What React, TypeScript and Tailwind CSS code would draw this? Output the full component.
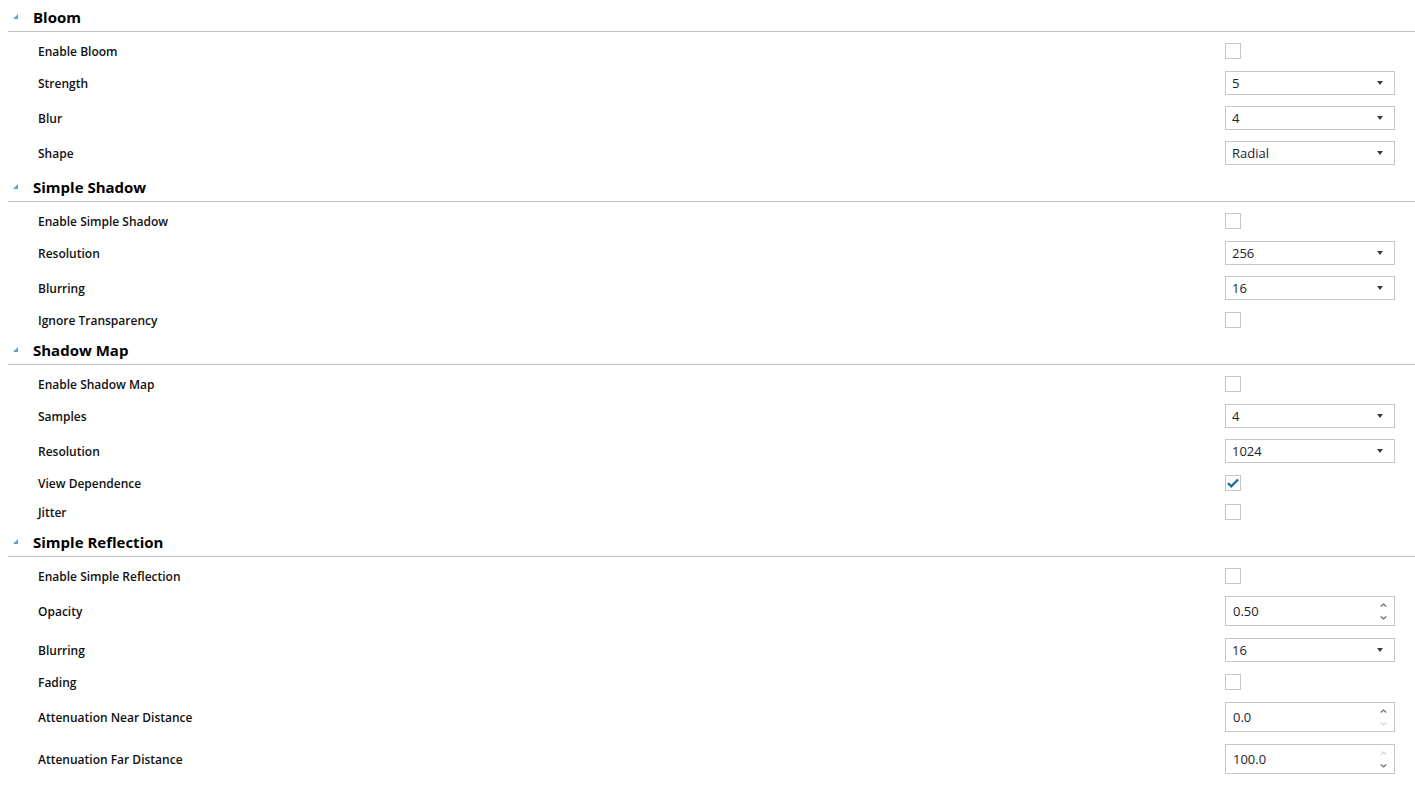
import React from "react";

type Row =
  | { kind: "check"; label: string; pad: string; checked?: boolean }
  | { kind: "select"; label: string; pad: string; value: string }
  | { kind: "num"; label: string; pad: string; value: string; up?: boolean; down?: boolean };

type Section = { title: string; pad: string; rows: Row[] };

const sections: Section[] = [
  {
    title: "Bloom",
    pad: "pt-[3px]",
    rows: [
      { kind: "check", label: "Enable Bloom", pad: "pt-[11px]" },
      { kind: "select", label: "Strength", pad: "pt-[12px]", value: "5" },
      { kind: "select", label: "Blur", pad: "pt-[11px]", value: "4" },
      { kind: "select", label: "Shape", pad: "pt-[11px]", value: "Radial" },
    ],
  },
  {
    title: "Simple Shadow",
    pad: "pt-[8px]",
    rows: [
      { kind: "check", label: "Enable Simple Shadow", pad: "pt-[11px]" },
      { kind: "select", label: "Resolution", pad: "pt-[12px]", value: "256" },
      { kind: "select", label: "Blurring", pad: "pt-[11px]", value: "16" },
      { kind: "check", label: "Ignore Transparency", pad: "pt-[12px]" },
    ],
  },
  {
    title: "Shadow Map",
    pad: "pt-[8px]",
    rows: [
      { kind: "check", label: "Enable Shadow Map", pad: "pt-[11px]" },
      { kind: "select", label: "Samples", pad: "pt-[12px]", value: "4" },
      { kind: "select", label: "Resolution", pad: "pt-[11px]", value: "1024" },
      { kind: "check", label: "View Dependence", pad: "pt-[12px]", checked: true },
      { kind: "check", label: "Jitter", pad: "pt-[13px]" },
    ],
  },
  {
    title: "Simple Reflection",
    pad: "pt-[8px]",
    rows: [
      { kind: "check", label: "Enable Simple Reflection", pad: "pt-[11px]" },
      { kind: "num", label: "Opacity", pad: "pt-[12px]", value: "0.50", up: true, down: true },
      { kind: "select", label: "Blurring", pad: "pt-[12px]", value: "16" },
      { kind: "check", label: "Fading", pad: "pt-[12px]" },
      { kind: "num", label: "Attenuation Near Distance", pad: "pt-[12px]", value: "0.0", up: true, down: false },
      { kind: "num", label: "Attenuation Far Distance", pad: "pt-[12px]", value: "100.0", up: false, down: true },
    ],
  },
];

const Checkbox = ({ checked }: { checked?: boolean }) => (
  <div className="w-4 h-4 border border-[#c6c6c6] bg-white flex items-center justify-center">
    {checked && (
      <svg width="12" height="10" viewBox="0 0 12 10">
        <path d="M1 5.2 L4.3 8.3 L11 1.5" fill="none" stroke="#1b6fa5" strokeWidth="2.4" />
      </svg>
    )}
  </div>
);

const Select = ({ value }: { value: string }) => (
  <div className="h-6 w-full border border-[#c6c6c6] bg-white flex items-center justify-between pl-[6px] pr-[11px]">
    <span className="text-[13px] text-[#1c2230] leading-none">{value}</span>
    <svg width="6" height="4" viewBox="0 0 6 4">
      <path d="M0 0 H6 L3 4 Z" fill="#3c3c3c" />
    </svg>
  </div>
);

const Chevron = ({ up, on }: { up: boolean; on?: boolean }) => (
  <svg width="7" height="4" viewBox="0 0 7 4">
    <path
      d={up ? "M0.8 3.4 L3.5 1 L6.2 3.4" : "M0.8 0.6 L3.5 3 L6.2 0.6"}
      fill="none"
      stroke={on ? "#6e6e6e" : "#d6d6d6"}
      strokeWidth="1.3"
    />
  </svg>
);

const NumBox = ({ value, up, down }: { value: string; up?: boolean; down?: boolean }) => (
  <div className="h-[30px] w-full border border-[#c6c6c6] bg-white flex items-center justify-between pl-[7px] pr-[7px]">
    <span className="text-[13px] text-[#1c2230] leading-none">{value}</span>
    <div className="flex flex-col gap-[9px] items-center">
      <Chevron up on={up} />
      <Chevron up={false} on={down} />
    </div>
  </div>
);

export default function App() {
  return (
    <div className="w-full min-h-screen bg-white font-['Open_Sans',sans-serif] text-[#111]">
      {sections.map((s) => (
        <div key={s.title}>
          <div className={s.pad}>
            <div className="ml-[8px] h-[28px] flex items-center border-b border-[#c3c3c3] box-content">
              <svg width="5" height="5" viewBox="0 0 5 5" className="ml-[5px] mr-[15px] -mt-[2px]">
                <path d="M5 0 V5 H0 Z" fill="#5aa2d8" />
              </svg>
              <span className="text-[15px] font-bold leading-none text-black">{s.title}</span>
            </div>
          </div>
          {s.rows.map((r, i) => (
            <div key={i} className={r.pad}>
              <div className="flex items-center pl-[38px] pr-[20px]">
                <div className="flex-1 pt-[2px] text-[12px] font-semibold leading-none text-[#111]">{r.label}</div>
                <div className="w-[170px]">
                  {r.kind === "check" && <Checkbox checked={r.checked} />}
                  {r.kind === "select" && <Select value={r.value} />}
                  {r.kind === "num" && <NumBox value={r.value} up={r.up} down={r.down} />}
                </div>
              </div>
            </div>
          ))}
        </div>
      ))}
    </div>
  );
}
